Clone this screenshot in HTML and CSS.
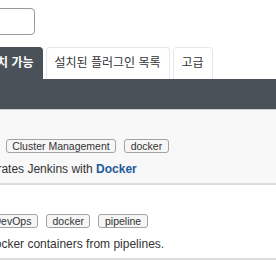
FILE: index.html
```html
<!doctype html>
<html>
    <head>
        <meta charset="utf-8" />
        <meta name="viewport" content="width=device-width" />
        <title>플러그인 관리</title>
        <link rel="stylesheet" href="styles.css">
    </head>
    <body>
        <div class="page">
            <div class="search">
                <input type="text" id="filter" />
            </div>
            <div class="tabs">
                <a class="tab active">설치 가능</a>
                <a class="tab">설치된 플러그인 목록</a>
                <a class="tab">고급</a>
            </div>
            <div class="toolbar"></div>
            <div class="plugin odd">
                <div class="tags">
                    <span class="tag">Cloud Providers</span>
                    <span class="tag">Cluster Management</span>
                    <span class="tag">docker</span>
                </div>
                <p class="excerpt">
                    This plugin integrates Jenkins with <a href="#">Docker</a>
                </p>
            </div>
            <div class="plugin">
                <div class="tags">
                    <span class="tag">Deployment</span>
                    <span class="tag">DevOps</span>
                    <span class="tag">docker</span>
                    <span class="tag">pipeline</span>
                </div>
                <p class="excerpt">Build and use Docker containers from pipelines.</p>
            </div>
        </div>
    </body>
</html>
```

FILE: styles.css
```css
body {
    margin: 0;
    font-family: "Liberation Sans", "Noto Sans CJK KR", sans-serif;
    color: #333;
    overflow: hidden;
}
.page {
    margin-left: -100px;
    width: 420px;
}
.search {
    padding-top: 8px;
}
.search input {
    display: block;
    box-sizing: border-box;
    width: 135px;
    height: 27px;
    margin: 0;
    border: 1px solid #9a9a9a;
    border-radius: 4px;
}
.tabs {
    display: flex;
    gap: 3px;
    margin-top: 12px;
    padding-left: 77px;
}
.tab {
    height: 31px;
    line-height: 31px;
    padding: 0 8px;
    font-size: 12px;
    color: #333;
    background: #fff;
    border: 1px solid #e4e8ee;
    border-bottom: 0;
    border-radius: 4px 4px 0 0;
    white-space: nowrap;
}
.tab.active {
    color: #fff;
    font-weight: bold;
    background: #4b5159;
    border-color: #4b5159;
}
.toolbar {
    height: 30px;
    background: #4b5159;
    border-bottom: 1px solid #c9ccd0;
}
.plugin {
    padding: 29px 0 6px 10px;
    border-bottom: 2px solid #dcdcdc;
    background: #fff;
}
.plugin.odd {
    background: #f8f8f8;
}
.tags {
    display: flex;
    gap: 8px;
}
.tag {
    font-size: 10.5px;
    line-height: 12px;
    padding: 0 5.5px;
    border: 1px solid #a3a3a3;
    border-radius: 3px;
    background: #f6f6f6;
    white-space: nowrap;
}
.excerpt {
    margin: 8px 0 0;
    font-size: 12px;
    line-height: 16px;
}
.excerpt a {
    color: #1d5a9b;
    font-weight: bold;
    text-decoration: none;
}
```
